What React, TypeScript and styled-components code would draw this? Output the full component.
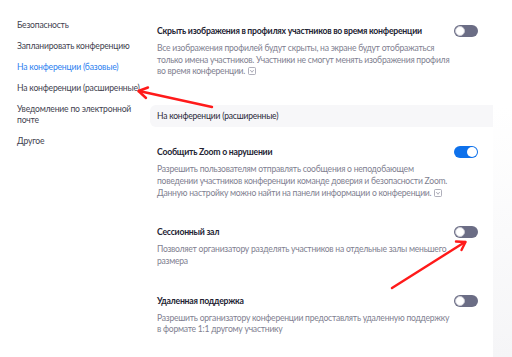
import * as React from 'react';
import styled, { createGlobalStyle } from 'styled-components';

const GlobalStyle = createGlobalStyle`
  html, body {
    margin: 0;
    padding: 0;
    background: #ffffff;
  }
  body {
    font-family: Lato, "Noto Sans", "Liberation Sans", sans-serif;
    -webkit-font-smoothing: antialiased;
  }
`;

const Page = styled.div`
  position: relative;
  display: flex;
  width: 512px;
  height: 357px;
  overflow: hidden;
`;

const Sidebar = styled.nav`
  width: 150px;
  flex: none;
  padding: 19.5px 0 0 17px;
  box-sizing: border-box;
  display: flex;
  flex-direction: column;
  gap: 9.5px;
`;

const NavItem = styled.div<{ $active?: boolean }>`
  font-size: 8.6px;
  letter-spacing: -0.2px;
  line-height: 11.5px;
  white-space: nowrap;
  color: ${(p) => (p.$active ? '#2d7ff0' : '#3f3f4f')};
`;

const Main = styled.main`
  width: 343px;
  flex: none;
  padding-top: 25px;
`;

const Gutter = styled.div`
  flex: 1;
  background: linear-gradient(to bottom, #ffffff 30%, #f5f5f7 100%);
`;

const Setting = styled.section`
  padding: 0 15px 0 7px;
  margin-bottom: 27px;
`;

const TitleRow = styled.div`
  display: flex;
  align-items: center;
  justify-content: space-between;
  height: 12px;
`;

const Title = styled.div`
  font-size: 8.7px;
  letter-spacing: -0.25px;
  font-weight: 700;
  color: #232333;
  line-height: 12px;
  white-space: nowrap;
`;

const Desc = styled.div`
  margin-top: 6px;
  font-size: 8.6px;
  letter-spacing: -0.25px;
  line-height: 11.7px;
  color: #7f7f91;
  white-space: nowrap;
`;

const Toggle = styled.div<{ $on?: boolean }>`
  position: relative;
  width: 24px;
  height: 12px;
  border-radius: 6px;
  flex: none;
  background: ${(p) => (p.$on ? '#0e71eb' : '#6b6d85')};
  &::after {
    content: '';
    position: absolute;
    top: 1px;
    left: ${(p) => (p.$on ? '13px' : '1px')};
    width: 10px;
    height: 10px;
    border-radius: 50%;
    background: #ffffff;
    box-sizing: border-box;
    border: ${(p) => (p.$on ? 'none' : '0.5px solid #c9c9d3')};
  }
`;

const SectionHeader = styled.div`
  height: 22px;
  display: flex;
  align-items: center;
  padding-left: 7px;
  background: #f7f7f9;
  border-radius: 6px 0 0 6px;
  font-size: 8.5px;
  letter-spacing: -0.2px;
  color: #2a2a3a;
  margin-bottom: 19px;
`;

const Overlay = styled.svg`
  position: absolute;
  left: 0;
  top: 0;
  pointer-events: none;
`;

const InfoIcon = () => (
  <svg
    width="8"
    height="8"
    viewBox="0 0 8 8"
    style={{ verticalAlign: '-1px', marginLeft: 3 }}
  >
    <rect x="0.5" y="0.5" width="7" height="7" rx="1" fill="none" stroke="#9a9aaa" strokeWidth="0.8" />
    <path d="M2.3 3 L4 5.3 L5.7 3" fill="none" stroke="#9a9aaa" strokeWidth="0.8" />
  </svg>
);

const navItems: React.ReactNode[] = [
  'Безопасность',
  'Запланировать конференцию',
  'На конференции (базовые)',
  'На конференции (расширенные)',
  <>
    Уведомление по электронной
    <br />
    почте
  </>,
  'Другое',
];

export default function App() {
  return (
    <>
      <GlobalStyle />
      <Page>
        <Sidebar>
          {navItems.map((t, i) => (
            <NavItem key={i} $active={i === 2}>
              {t}
            </NavItem>
          ))}
        </Sidebar>
        <Main>
          <Setting>
            <TitleRow>
              <Title>Скрыть изображения в профилях участников во время конференции</Title>
              <Toggle />
            </TitleRow>
            <Desc>
              Все изображения профилей будут скрыты, на экране будут отображаться
              <br />
              только имена участников. Участники не смогут менять изображения профиля
              <br />
              во время конференции.
              <InfoIcon />
            </Desc>
          </Setting>
          <SectionHeader>На конференции (расширенные)</SectionHeader>
          <Setting>
            <TitleRow>
              <Title>Сообщить Zoom о нарушении</Title>
              <Toggle $on />
            </TitleRow>
            <Desc>
              Разрешить пользователям отправлять сообщения о неподобающем
              <br />
              поведении участников конференции команде доверия и безопасности Zoom.
              <br />
              Данную настройку можно найти на панели информации о конференции.
              <InfoIcon />
            </Desc>
          </Setting>
          <Setting>
            <TitleRow>
              <Title>Сессионный зал</Title>
              <Toggle />
            </TitleRow>
            <Desc>
              Позволяет организатору разделять участников на отдельные залы меньшего
              <br />
              размера
            </Desc>
          </Setting>
          <Setting>
            <TitleRow>
              <Title>Удаленная поддержка</Title>
              <Toggle />
            </TitleRow>
            <Desc>
              Разрешить организатору конференции предоставлять удаленную поддержку
              <br />
              в формате 1:1 другому участнику
            </Desc>
          </Setting>
        </Main>
        <Gutter />
        <Overlay width="512" height="357" viewBox="0 0 512 357">
          <g stroke="#ff1a1a" strokeWidth="2.4" strokeLinecap="round" strokeLinejoin="round" fill="none">
            <path d="M212 107 L139 91" />
            <path d="M148 87.5 L138.5 91 L146 98" />
            <path d="M392 288 L465 242" />
            <path d="M456 241.5 L465.5 242 L461.5 250" />
          </g>
        </Overlay>
      </Page>
    </>
  );
}
